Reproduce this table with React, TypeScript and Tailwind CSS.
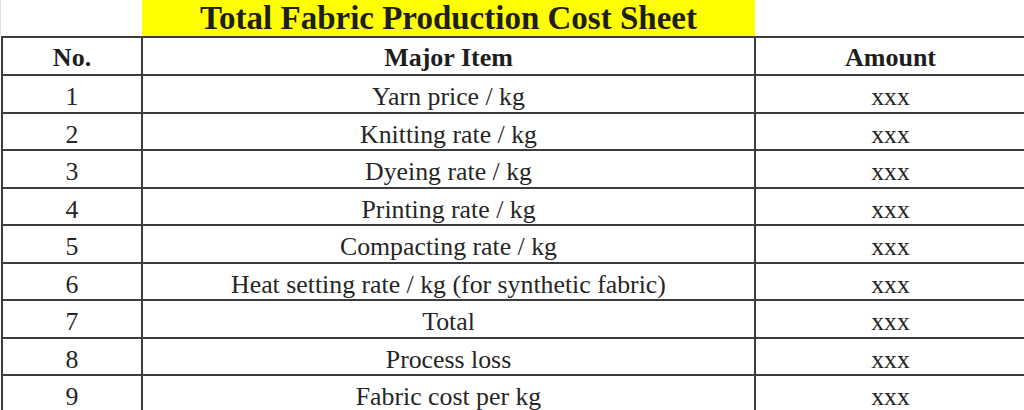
const rows = [
  ["1", "Yarn price / kg"],
  ["2", "Knitting rate / kg"],
  ["3", "Dyeing rate / kg"],
  ["4", "Printing rate / kg"],
  ["5", "Compacting rate / kg"],
  ["6", "Heat setting rate / kg (for synthetic fabric)"],
  ["7", "Total"],
  ["8", "Process loss"],
  ["9", "Fabric cost per kg"],
];

const serif = { fontFamily: '"Liberation Serif", "Times New Roman", serif' };

export default function App() {
  return (
    <div className="w-[1024px] h-[410px] overflow-hidden bg-white text-[#1e1e1e]" style={serif}>
      <div className="flex h-[36px]">
        <div className="w-[142px] border-l border-[#e2e2e2]" />
        <div className="w-[613px] bg-[#ffff00] flex items-center justify-center text-[33px] font-bold leading-none">
          Total Fabric Production Cost Sheet
        </div>
        <div className="flex-1" />
      </div>
      <div className="ml-[1px] w-[1060px] border-t-2 border-l-2 border-[#3c3c3c]">
        <div className="grid grid-cols-[140px_613px_1fr] h-[38px] border-b-2 border-[#3c3c3c] text-[26px] font-bold">
          <div className="flex items-center justify-center border-r-2 border-[#3c3c3c]">No.</div>
          <div className="flex items-center justify-center border-r-2 border-[#3c3c3c]">Major Item</div>
          <div className="flex items-center justify-center pr-[36px]">Amount</div>
        </div>
        {rows.map(([no, item]) => (
          <div
            key={no}
            className="grid grid-cols-[140px_613px_1fr] h-[37.5px] border-b-2 border-[#3c3c3c] text-[25.8px] text-[#262626]"
          >
            <div className="flex items-center justify-center border-r-2 border-[#3c3c3c] pt-[2px]">{no}</div>
            <div className="flex items-center justify-center border-r-2 border-[#3c3c3c] pt-[2px]">{item}</div>
            <div className="flex items-center justify-center pr-[36px] pt-[2px]">xxx</div>
          </div>
        ))}
      </div>
    </div>
  );
}
